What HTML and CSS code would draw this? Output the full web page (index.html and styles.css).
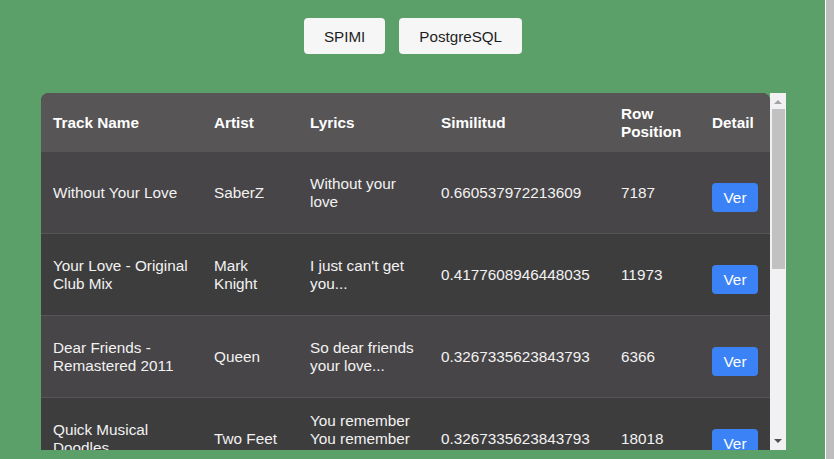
FILE: index.html
```html
<!DOCTYPE html>
<html>
<head>
<meta charset="utf-8">
<link rel="stylesheet" href="styles.css">
</head>
<body>
<div class="page">
  <main class="main">
    <div class="toolbar">
      <button class="tool-btn">SPIMI</button>
      <button class="tool-btn">PostgreSQL</button>
    </div>
    <div class="table-box">
      <div class="scroll-area">
        <table class="results">
          <colgroup>
            <col class="c-track"><col class="c-artist"><col class="c-lyrics"><col class="c-sim"><col class="c-pos"><col class="c-detail">
          </colgroup>
          <thead>
            <tr><th>Track Name</th><th>Artist</th><th>Lyrics</th><th>Similitud</th><th>Row Position</th><th>Detail</th></tr>
          </thead>
          <tbody>
            <tr class="odd"><td>Without Your Love</td><td>SaberZ</td><td>Without your love</td><td>0.660537972213609</td><td>7187</td><td><button class="ver">Ver</button></td></tr>
            <tr class="even"><td>Your Love - Original Club Mix</td><td>Mark Knight</td><td>I just can't get you...</td><td>0.4177608946448035</td><td>11973</td><td><button class="ver">Ver</button></td></tr>
            <tr class="odd"><td>Dear Friends - Remastered 2011</td><td>Queen</td><td>So dear friends your love...</td><td>0.3267335623843793</td><td>6366</td><td><button class="ver">Ver</button></td></tr>
            <tr class="even"><td>Quick Musical Doodles</td><td>Two Feet</td><td>You remember You remember me...</td><td>0.3267335623843793</td><td>18018</td><td><button class="ver">Ver</button></td></tr>
          </tbody>
        </table>
      </div>
      <div class="scrollbar">
        <div class="arrow-up"></div>
        <div class="thumb"></div>
        <div class="track-rest"></div>
        <div class="arrow-down"></div>
      </div>
    </div>
  </main>
  <div class="page-scroll"></div>
</div>
</body>
</html>
```
FILE: styles.css
```css
html, body {
  margin: 0;
  padding: 0;
  height: 459px;
  overflow: hidden;
}
body {
  background: #5b9f69;
  font-family: "Liberation Sans", Arial, sans-serif;
}
.page {
  display: flex;
  width: 834px;
  height: 459px;
}
.main {
  width: 825px;
  flex-shrink: 0;
  display: flex;
  flex-direction: column;
}
.page-scroll {
  width: 8px;
  height: 459px;
  flex-shrink: 0;
  border-left: 1px solid #ffffff;
  background: #bdbdbd;
}
.toolbar {
  display: flex;
  justify-content: center;
  gap: 14px;
  margin-top: 18px;
  padding-left: 1px;
}
.tool-btn {
  height: 36px;
  padding: 0 20px;
  border: none;
  border-radius: 4px;
  background: #f6f6f7;
  color: #1e1e1e;
  font-family: "Liberation Sans", Arial, sans-serif;
  font-size: 15.2px;
}
.table-box {
  display: flex;
  margin: 39px 0 0 41px;
  width: 745px;
  height: 357px;
}
.scroll-area {
  flex: 1;
  overflow: hidden;
  border-radius: 8px 8px 0 0;
  background: #3f3e3f;
}
.results {
  width: 729px;
  border-collapse: collapse;
  table-layout: fixed;
  color: #f2f2f2;
  font-size: 15.3px;
}
.c-track { width: 161px; }
.c-artist { width: 96px; }
.c-lyrics { width: 131px; }
.c-sim { width: 180px; }
.c-pos { width: 91px; }
.c-detail { width: 70px; }
.results th {
  height: 59px;
  padding: 0 12px;
  text-align: left;
  font-weight: bold;
  color: #ffffff;
  background: #575556;
  line-height: 18px;
}
.results td {
  height: 81px;
  padding: 0 12px;
  line-height: 17.5px;
  vertical-align: middle;
  border-bottom: 1px solid #575557;
}
.odd td { background: #474547; }
.even td { background: #3e3d3e; }
.ver {
  margin-top: 10px;
  width: 46px;
  height: 29px;
  padding: 0;
  border: none;
  border-radius: 4px;
  background: #3b82f6;
  color: #ffffff;
  font-family: "Liberation Sans", Arial, sans-serif;
  font-size: 15.3px;
}
.scrollbar {
  width: 16px;
  background: #f1f0f3;
  display: flex;
  flex-direction: column;
  align-items: center;
}
.arrow-up {
  margin-top: 7px;
  width: 0;
  height: 0;
  border-left: 4px solid transparent;
  border-right: 4px solid transparent;
  border-bottom: 4px solid #a3a3a3;
}
.thumb {
  margin-top: 5px;
  margin-left: 1px;
  width: 13px;
  height: 160px;
  background: #c1c1c1;
}
.track-rest {
  flex: 1;
}
.arrow-down {
  margin-bottom: 7px;
  width: 0;
  height: 0;
  border-left: 4px solid transparent;
  border-right: 4px solid transparent;
  border-top: 4px solid #505050;
}
```
